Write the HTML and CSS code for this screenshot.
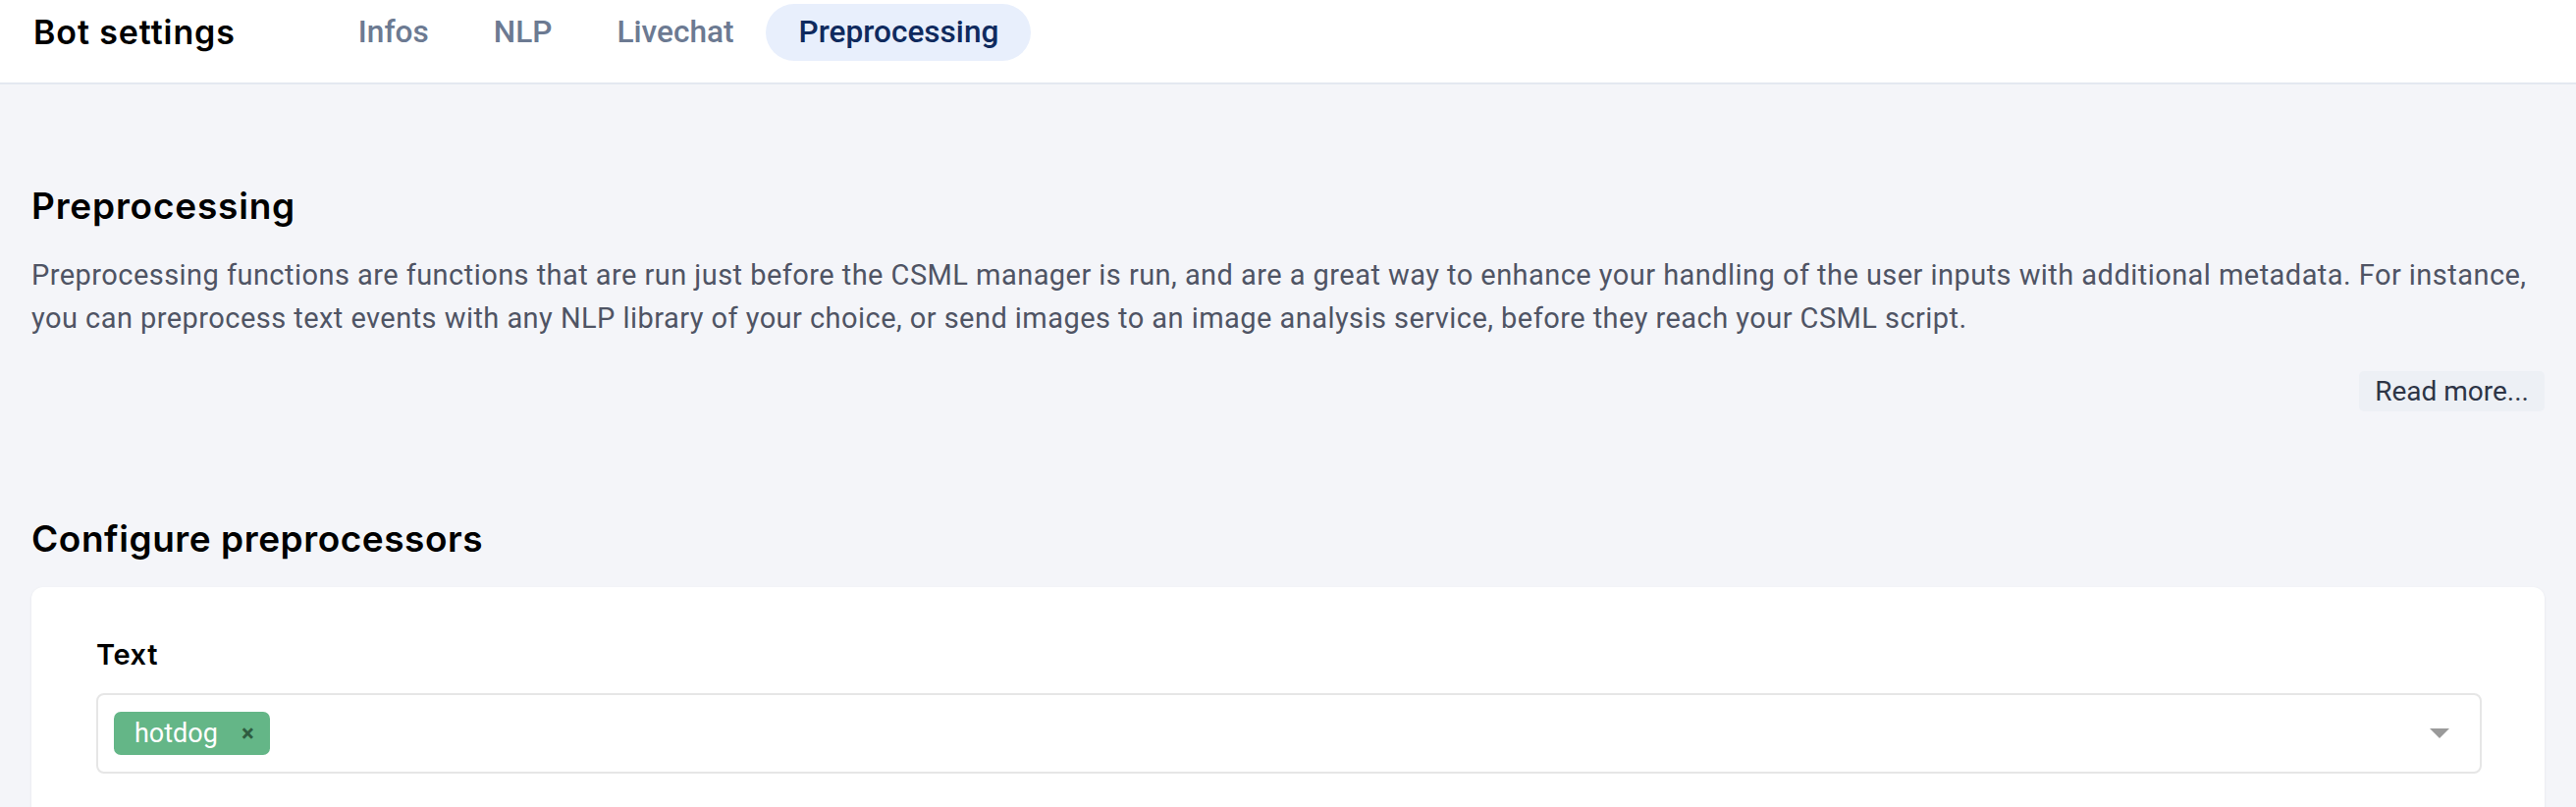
FILE: index.html
```html
<!DOCTYPE html>
<html lang="en">
<head>
<meta charset="utf-8">
<title>Bot settings</title>
<link rel="stylesheet" href="styles.css">
</head>
<body>
<header class="topbar">
  <div class="title">Bot settings</div>
  <nav class="tabs">
    <a class="tab">Infos</a>
    <a class="tab">NLP</a>
    <a class="tab">Livechat</a>
    <a class="tab active">Preprocessing</a>
  </nav>
</header>
<main class="content">
  <section class="intro">
    <h2 class="heading">Preprocessing</h2>
    <p class="desc">Preprocessing functions are functions that are run just before the CSML manager is run, and are a great way to enhance your handling of the user inputs with additional metadata. For instance, you can preprocess text events with any NLP library of your choice, or send images to an image analysis service, before they reach your CSML script.</p>
    <div class="actions"><button class="readmore">Read more...</button></div>
  </section>
  <section class="config">
    <h2 class="heading heading-wide">Configure preprocessors</h2>
    <div class="card">
      <div class="label">Text</div>
      <div class="select">
        <div class="tags">
          <span class="tag"><span class="tag-text">hotdog</span><span class="tag-x">×</span></span>
        </div>
        <span class="caret"></span>
      </div>
    </div>
  </section>
</main>
</body>
</html>
```
FILE: styles.css
```css
html, body {
  margin: 0;
  padding: 0;
}
body {
  background: #f4f5f9;
  font-family: Roboto, "Liberation Sans", sans-serif;
  overflow: hidden;
}
.topbar {
  background: #ffffff;
  border-bottom: 2px solid #e4e8f0;
  display: flex;
  align-items: flex-start;
  padding: 4px 0 0 34px;
  box-sizing: content-box;
  height: 80px;
}
.title {
  font-family: Inter, "Liberation Sans", sans-serif;
  font-weight: 600;
  font-size: 34px;
  line-height: 58px;
  color: #000;
  letter-spacing: 0.9px;
}
.tabs {
  display: flex;
  margin-left: 92px;
}
.tab {
  font-family: Roboto, sans-serif;
  font-weight: 500;
  font-size: 31.6px;
  line-height: 58px;
  height: 58px;
  padding: 0 33px;
  color: #6c7a92;
  border-radius: 29px;
}
.tab.active {
  background: #e8effc;
  color: #0f2a5e;
}
.content {
  padding: 102px 32px 0 32px;
}
.heading {
  font-family: Inter, "Liberation Sans", sans-serif;
  font-weight: 600;
  font-size: 37px;
  line-height: 44px;
  margin: 0;
  color: #000;
  letter-spacing: 0.8px;
}
.heading-wide {
  letter-spacing: 0.55px;
}
.desc {
  margin: 27px 0 0 0;
  font-size: 29px;
  line-height: 43.5px;
  letter-spacing: 0.45px;
  color: #4f5464;
}
.actions {
  display: flex;
  justify-content: flex-end;
  margin-top: 32px;
}
.readmore {
  font-family: Roboto, sans-serif;
  font-size: 28px;
  line-height: 41px;
  height: 41px;
  padding: 0 16px;
  border: none;
  border-radius: 5px;
  background: #edf0f5;
  color: #2d3546;
}
.config {
  margin-top: 108px;
}
.card {
  margin-top: 27px;
  background: #ffffff;
  border-radius: 12px;
  box-shadow: 0 1px 3px rgba(20, 30, 60, 0.08);
  padding: 51px 64px 60px 66px;
  height: 400px;
}
.label {
  font-family: Inter, "Liberation Sans", sans-serif;
  font-weight: 600;
  font-size: 29px;
  line-height: 36px;
  color: #000;
  letter-spacing: 0.6px;
}
.select {
  margin-top: 21px;
  height: 78px;
  border: 2px solid #e6e6e6;
  border-radius: 8px;
  display: flex;
  align-items: center;
  padding: 0 31px 0 16px;
  background: #fff;
}
.tags {
  flex: 1;
  display: flex;
}
.tag {
  display: inline-flex;
  align-items: center;
  height: 44px;
  background: #64b687;
  border-radius: 7px;
  padding: 0 16px 0 21px;
}
.tag-text {
  color: #ffffff;
  font-size: 27px;
  line-height: 44px;
}
.tag-x {
  color: #2f5c40;
  font-weight: 700;
  font-size: 24px;
  margin-left: 24px;
  line-height: 44px;
}
.caret {
  width: 0;
  height: 0;
  border-left: 10px solid transparent;
  border-right: 10px solid transparent;
  border-top: 10px solid #9a9a9a;
}
```
